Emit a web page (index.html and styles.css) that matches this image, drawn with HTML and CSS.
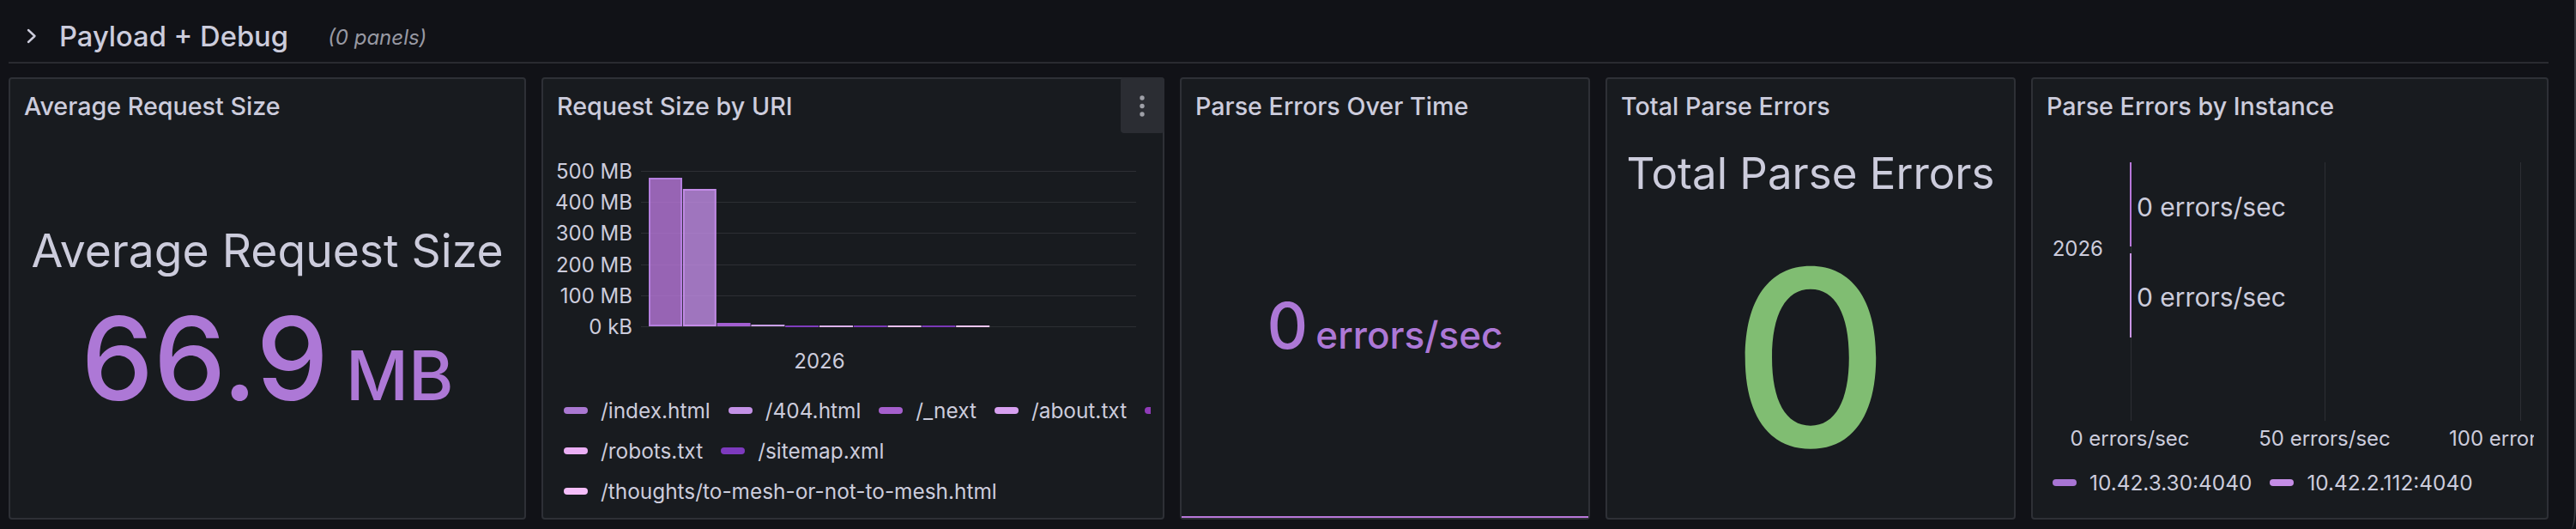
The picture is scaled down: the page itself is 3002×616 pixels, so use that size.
FILE: index.html
```html
<!DOCTYPE html>
<html lang="en">
<head>
<meta charset="utf-8">
<title>Payload + Debug</title>
<link rel="stylesheet" href="styles.css">
</head>
<body>
<div class="page">
  <div class="row-header">
    <svg class="chev" viewBox="0 0 14 20" width="14" height="20"><polyline points="3,3 10.5,10 3,17"/></svg>
    <span class="row-title">Payload + Debug</span>
    <span class="row-count">(0 panels)</span>
  </div>
  <div class="row-divider"></div>
  <div class="grid">
    <section class="panel">
      <div class="panel-header"><h2 class="panel-title">Average Request Size</h2></div>
      <div class="stat stat-avg">
        <div class="stat-name name-avg">Average Request Size</div>
        <div class="stat-value avg-value"><span class="num">66.9</span><span class="unit">MB</span></div>
      </div>
    </section>

    <section class="panel">
      <div class="panel-header"><h2 class="panel-title">Request Size by URI</h2></div>
      <div class="menu-btn">
        <svg width="51" height="65" viewBox="0 0 51 65"><circle cx="25" cy="24" r="2.7"/><circle cx="25" cy="33.5" r="2.7"/><circle cx="25" cy="43" r="2.7"/></svg>
      </div>
      <svg class="chart" width="722" height="280" viewBox="0 0 722 280">
        <g class="grid-lines">
          <line x1="114" x2="691" y1="43.5" y2="43.5"/>
          <line x1="114" x2="691" y1="79.5" y2="79.5"/>
          <line x1="114" x2="691" y1="115.5" y2="115.5"/>
          <line x1="114" x2="691" y1="152.5" y2="152.5"/>
          <line x1="114" x2="691" y1="188.5" y2="188.5"/>
          <line x1="114" x2="691" y1="224.5" y2="224.5"/>
        </g>
        <g class="axis" text-anchor="end">
          <text x="104" y="51.5">500 MB</text>
          <text x="104" y="87.5">400 MB</text>
          <text x="104" y="123.5">300 MB</text>
          <text x="104" y="160.5">200 MB</text>
          <text x="104" y="196.5">100 MB</text>
          <text x="104" y="232.5">0 kB</text>
        </g>
        <rect class="bar b1" x="124" y="52" width="37" height="171"/>
        <rect class="bar b2" x="163.8" y="65" width="37" height="158"/>
        <rect class="solid s3" x="202.6" y="220" width="39" height="4"/>
        <rect class="solid s4" x="242.4" y="222" width="39" height="2"/>
        <rect class="solid s5" x="282.2" y="223" width="39" height="2"/>
        <rect class="solid s6" x="322" y="223" width="39" height="2"/>
        <rect class="solid s7" x="361.8" y="223" width="39" height="2"/>
        <rect class="solid s8" x="401.6" y="223" width="39" height="2"/>
        <rect class="solid s9" x="441.4" y="223" width="39" height="2"/>
        <rect class="solid s10" x="481.2" y="223" width="39" height="2"/>
        <text class="axis" x="322" y="272.7" text-anchor="middle">2026</text>
      </svg>
      <div class="legend legend-uri">
        <div class="legend-row">
          <span class="legend-item"><span class="swatch c1"></span>/index.html</span>
          <span class="legend-item"><span class="swatch c2"></span>/404.html</span>
          <span class="legend-item"><span class="swatch c3"></span>/_next</span>
          <span class="legend-item"><span class="swatch c4"></span>/about.txt</span>
          <span class="legend-item"><span class="swatch c5"></span></span>
        </div>
        <div class="legend-row">
          <span class="legend-item"><span class="swatch c6"></span>/robots.txt</span>
          <span class="legend-item"><span class="swatch c7"></span>/sitemap.xml</span>
        </div>
        <div class="legend-row">
          <span class="legend-item"><span class="swatch c8"></span>/thoughts/to-mesh-or-not-to-mesh.html</span>
        </div>
      </div>
    </section>

    <section class="panel">
      <div class="panel-header"><h2 class="panel-title">Parse Errors Over Time</h2></div>
      <div class="spark">
        <div class="spark-center">
          <div class="stat-value spark-value"><span class="num">0</span><span class="unit">errors/sec</span></div>
        </div>
        <div class="spark-line"></div>
      </div>
    </section>

    <section class="panel">
      <div class="panel-header"><h2 class="panel-title">Total Parse Errors</h2></div>
      <div class="stat stat-total">
        <div class="stat-name name-total">Total Parse Errors</div>
        <div class="total-value">0</div>
      </div>
    </section>

    <section class="panel">
      <div class="panel-header"><h2 class="panel-title">Parse Errors by Instance</h2></div>
      <svg class="chart" width="584" height="382" viewBox="0 0 584 382">
        <g class="grid-lines">
          <line x1="114.5" x2="114.5" y1="33" y2="334"/>
          <line x1="340.5" x2="340.5" y1="33" y2="334"/>
          <line x1="568.5" x2="568.5" y1="33" y2="334"/>
        </g>
        <rect class="hbar h1" x="113" y="33" width="2" height="98"/>
        <rect class="hbar h2" x="113" y="139" width="2" height="98"/>
        <text class="axis" x="82" y="141.7" text-anchor="end">2026</text>
        <text class="axis value-label" x="121" y="95.9">0 errors/sec</text>
        <text class="axis value-label" x="121" y="200.9">0 errors/sec</text>
        <g class="axis" text-anchor="middle">
          <text x="113" y="362.7">0 errors/sec</text>
          <text x="340" y="362.7">50 errors/sec</text>
          <text x="567" y="362.7">100 errors/sec</text>
        </g>
      </svg>
      <div class="legend legend-inst">
        <div class="legend-row">
          <span class="legend-item"><span class="swatch i1"></span>10.42.3.30:4040</span>
          <span class="legend-item"><span class="swatch i2"></span>10.42.2.112:4040</span>
        </div>
      </div>
    </section>
  </div>
</div>
</body>
</html>
```

FILE: styles.css
```css
* { box-sizing: border-box; }

html, body {
  margin: 0;
  padding: 0;
  background: #111217;
  overflow: hidden;
}

body {
  width: 3002px;
  height: 616px;
  font-family: Inter, "Noto Sans", sans-serif;
  color: #ccccdc;
}

.page {
  width: 3002px;
  height: 616px;
  padding-left: 10px;
  border-right: 2px solid #37383e;
  border-bottom-right-radius: 6px 27px;
}

/* Row header */
.row-header {
  display: flex;
  align-items: center;
  height: 72px;
  padding-top: 11px;
}

.chev {
  flex: none;
  margin-left: 20px;
  fill: none;
  stroke: #ccccdc;
  stroke-width: 2.4;
  stroke-linecap: round;
  stroke-linejoin: round;
}

.row-title {
  margin-left: 25px;
  font-size: 32.7px;
  font-weight: 500;
  line-height: 40px;
  white-space: nowrap;
}

.row-count {
  margin-left: 46px;
  padding-top: 3px;
  font-size: 24px;
  font-style: italic;
  color: #9899a3;
  white-space: nowrap;
}

.row-divider {
  width: 2960px;
  height: 2px;
  background: #2a2b31;
}

/* Panel grid */
.grid {
  display: grid;
  grid-template-columns: 603px 726px 478px 478px 603px;
  column-gap: 18px;
  margin-top: 16px;
  height: 515px;
}

.panel {
  position: relative;
  display: flex;
  flex-direction: column;
  min-width: 0;
  background: #181b1f;
  border: 2px solid #2e3036;
  border-radius: 4px;
}

.panel-header {
  flex: none;
  display: flex;
  align-items: center;
  height: 64px;
  padding: 0 16px;
}

.panel-title {
  margin: 0;
  font-size: 28.7px;
  font-weight: 500;
  line-height: 64px;
  white-space: nowrap;
  color: #ccccdc;
}

.menu-btn {
  position: absolute;
  top: -2px;
  right: -2px;
  width: 51px;
  height: 65px;
  background: #2b2d33;
  border-radius: 4px;
}

.menu-btn svg {
  display: block;
  fill: #9fa0a8;
}

/* Stat panels */
.stat {
  flex: 1;
  display: flex;
  flex-direction: column;
  align-items: center;
}

.stat-avg { padding-top: 105px; }
.stat-total { padding-top: 15px; }

.stat-name {
  line-height: 62px;
  font-weight: 400;
  white-space: nowrap;
  color: #ccccdc;
}

.name-avg { font-size: 53.4px; }
.name-total { font-size: 51px; }

.stat-value {
  display: flex;
  align-items: baseline;
  color: #ad78d6;
  font-weight: 500;
  white-space: nowrap;
}

.avg-value { margin-top: 27px; }
.avg-value .num { font-size: 134px; line-height: 134px; }
.avg-value .unit { font-size: 80px; line-height: 80px; margin-left: 20px; }

.total-value {
  margin-top: 41px;
  color: #80bd72;
  font-size: 285px;
  line-height: 285px;
  font-weight: 500;
}

/* Stat with sparkline */
.spark {
  flex: 1;
  display: flex;
  flex-direction: column;
}

.spark-center {
  flex: 1;
  display: flex;
  align-items: center;
  justify-content: center;
}

.spark-value .num { font-size: 74px; line-height: 74px; }
.spark-value .unit { font-size: 44px; line-height: 44px; margin-left: 9px; }

.spark-line {
  flex: none;
  height: 2px;
  background: #b877d9;
}

/* Charts */
.chart {
  display: block;
  flex: none;
}

.axis {
  font-family: Inter, "Noto Sans", sans-serif;
  font-size: 24px;
  fill: #ccccdc;
}

.value-label { font-size: 30px; }

.grid-lines line {
  stroke: #2d2f34;
  stroke-width: 1;
}

.bar { stroke-width: 2; fill-opacity: 0.8; }
.b1 { fill: #b877d9; stroke: #b57fdf; }
.b2 { fill: #c28ce6; stroke: #c48ce8; }
.s3 { fill: #a35fd1; }
.s4 { fill: #c9a0e8; }
.s5 { fill: #7f3dbd; }
.s6 { fill: #dcb2ec; }
.s7 { fill: #7c3ab8; }
.s8 { fill: #e8bff2; }
.s9 { fill: #7a38b6; }
.s10 { fill: #f3c6f8; }

.h1 { fill: #b877d9; }
.h2 { fill: #ca95e5; }

/* Legends */
.legend { flex: none; }

.legend-uri {
  width: 708px;
  padding-left: 24px;
  margin-top: 18px;
  overflow: hidden;
}

.legend-inst { padding-left: 23px; }

.legend-row {
  display: flex;
  align-items: center;
  height: 47px;
  white-space: nowrap;
}

.legend-item {
  flex: none;
  display: flex;
  align-items: center;
  margin-right: 21px;
  font-size: 24.4px;
  color: #ccccdc;
}

.swatch {
  flex: none;
  width: 28px;
  height: 8px;
  border-radius: 4px;
  margin-right: 15px;
}

.c1 { background: #aa78d2; }
.c2 { background: #c391e6; }
.c3 { background: #a55fcd; }
.c4 { background: #d7a0f0; }
.c5 { background: #8f3bb8; }
.c6 { background: #ebaff5; }
.c7 { background: #7d3abe; }
.c8 { background: #f5befa; }

.i1 { background: #a875d4; }
.i2 { background: #c58de6; }
```
